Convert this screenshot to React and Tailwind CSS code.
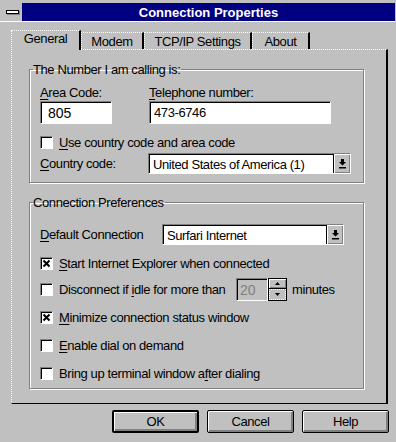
import React from 'react';

const font = { fontFamily: '"Liberation Sans", Arial, sans-serif' };

const U = ({ children }) => <span className="underline underline-offset-2">{children}</span>;

const Sunken = ({ className = '', children }) => (
  <div className={`border border-t-[#808080] border-l-[#808080] border-r-white border-b-white shadow-[inset_1px_1px_0_#000] ${className}`}>
    {children}
  </div>
);

const CheckBox = ({ checked }) => (
  <div className="w-[13px] h-[13px] bg-white border border-t-[#808080] border-l-[#808080] border-r-white border-b-white shadow-[inset_1px_1px_0_#000] flex items-center justify-center shrink-0">
    {checked && (
      <svg width="9" height="9" viewBox="0 0 9 9">
        <path d="M1.5 1.5 L7.5 7.5 M7.5 1.5 L1.5 7.5" stroke="#000" strokeWidth="2" />
      </svg>
    )}
  </div>
);

const DropArrow = () => (
  <div className="w-[17px] h-full bg-[#c0c0c0] border-l border-black flex items-center justify-center shadow-[inset_1px_1px_0_#fff,inset_-1px_-1px_0_#808080]">
    <svg width="9" height="11" viewBox="0 0 9 11">
      <path d="M3 1 H6 V4 H8 L4.5 7.5 L1 4 H3 Z" fill="#000" />
      <rect x="1" y="9" width="7" height="1.5" fill="#000" />
    </svg>
  </div>
);

const Select = ({ value, className }) => (
  <Sunken className={`flex items-stretch bg-white ${className}`}>
    <div className="flex-1 flex items-center pl-[4px] pt-[1px] text-[13px] tracking-[-0.4px]">{value}</div>
    <DropArrow />
  </Sunken>
);

const Check = ({ checked, h, children }) => (
  <div className={`flex items-center gap-[6px] ${h}`}>
    <CheckBox checked={checked} />
    <span className="whitespace-nowrap">{children}</span>
  </div>
);

const Button = ({ children, isDefault }) => (
  <div
    className={`w-[87px] h-[23px] rounded-[2px] bg-[#c0c0c0] flex items-center justify-center text-[13px] ${
      isDefault ? 'border-2' : 'border'
    } border-black shadow-[inset_1px_1px_0_#fff,inset_-2px_-2px_0_#808080]`}
  >
    {children}
  </div>
);

const Tab = ({ children, active, w }) => (
  <div
    className={`${w} flex justify-center text-[13px] border-t border-l border-dotted border-white border-r-2 border-r-black [border-right-style:solid] ${
      active ? 'h-[20px] pt-[1px] -mb-[1px] relative bg-[#c0c0c0] z-10' : 'h-[17px] pt-[2px]'
    }`}
  >
    {children}
  </div>
);

export default function App() {
  return (
    <div className="w-[396px] h-[442px] bg-[#c0c0c0] overflow-hidden text-[13px] tracking-[-0.4px] text-black leading-none" style={font}>
      {/* title bar */}
      <div className="pt-[3px] pl-[3px] pr-[1px] flex h-[21px]">
        <div className="w-[19px] bg-[#c0c0c0] flex items-center justify-center">
          <div className="w-[13px] h-[4px] bg-white border border-black shadow-[1px_1px_0_#808080]" />
        </div>
        <div className="flex-1 bg-[#000080] flex items-center justify-center">
          <span className="text-white font-bold text-[13px] tracking-normal">Connection Properties</span>
        </div>
      </div>
      <div className="h-[1px] bg-white mr-[1px]" />

      {/* tabs */}
      <div className="mt-[8px] ml-[11px] flex items-end h-[19px]">
        <Tab active w="w-[70px]">General</Tab>
        <Tab w="w-[63px]">Modem</Tab>
        <Tab w="w-[108px]">TCP/IP Settings</Tab>
        <Tab w="w-[58px]">About</Tab>
      </div>

      {/* panel */}
      <div className="ml-[11px] w-[377px] h-[355px] border-t border-l border-dotted border-white border-r-2 border-b border-r-black border-b-black [border-right-style:solid] [border-bottom-style:solid]">
        <fieldset className="ml-[17px] mt-[13px] w-[335px] border border-[#808080] shadow-[1px_1px_0_#fff,inset_1px_1px_0_#fff] pl-[10px] pb-[8px]">
          <legend className="ml-[-7px] pr-[1px]">The Number I am calling is:</legend>
          <div className="flex mt-[10px]">
            <div className="w-[109px]">
              <div className="h-[15px]"><U>A</U>rea Code:</div>
              <Sunken className="w-[72px] h-[23px] bg-white flex items-center pl-[7px] text-[14px] tracking-normal">805</Sunken>
            </div>
            <div>
              <div className="h-[15px]"><U>T</U>elephone number:</div>
              <Sunken className="w-[182px] h-[23px] bg-white flex items-center pl-[4px]">473-6746</Sunken>
            </div>
          </div>
          <div className="flex items-center gap-[6px] mt-[12px]">
            <CheckBox />
            <span><U>U</U>se country code and area code</span>
          </div>
          <div className="flex items-center mt-[4px]">
            <div className="w-[108px]"><U>C</U>ountry code:</div>
            <Select value="United States of America (1)" className="w-[203px] h-[21px]" />
          </div>
        </fieldset>

        <fieldset className="ml-[17px] mt-[13px] w-[335px] border border-[#808080] shadow-[1px_1px_0_#fff,inset_1px_1px_0_#fff] pl-[10px] pb-[1px]">
          <legend className="ml-[-7px] pr-[1px]">Connection Preferences</legend>
          <div className="flex items-center mt-[15px]">
            <div className="w-[122px]"><U>D</U>efault Connection</div>
            <Select value="Surfari Internet" className="w-[182px] h-[21px]" />
          </div>
          <div className="mt-[5px]">
            <Check checked h="h-[26px]"><U>S</U>tart Internet Explorer when connected</Check>
            <div className="flex items-center h-[27px]">
              <CheckBox />
              <span className="ml-[6px] w-[177px] whitespace-nowrap">Disconnect if <U>i</U>dle for more than</span>
              <Sunken className="w-[32px] h-[23px] bg-[#c0c0c0] text-[#808080] flex items-center pl-[3px] text-[14px] tracking-normal">20</Sunken>
              <div className="w-[19px] h-[23px] border border-black flex flex-col">
                <div className="flex-1 bg-[#c0c0c0] shadow-[inset_1px_1px_0_#fff,inset_-1px_-1px_0_#808080] flex items-center justify-center border-b border-black">
                  <svg width="5" height="3" viewBox="0 0 5 3"><path d="M2.5 0 L5 3 H0 Z" fill="#000" /></svg>
                </div>
                <div className="flex-1 bg-[#c0c0c0] border border-dotted border-white flex items-center justify-center">
                  <svg width="5" height="3" viewBox="0 0 5 3"><path d="M0 0 H5 L2.5 3 Z" fill="#000" /></svg>
                </div>
              </div>
              <span className="ml-[5px]">minutes</span>
            </div>
            <Check checked h="h-[28px]"><U>M</U>inimize connection status window</Check>
            <Check h="h-[28px]"><U>E</U>nable dial on demand</Check>
            <Check h="h-[28px]">Bring up terminal window a<U>f</U>ter dialing</Check>
          </div>
        </fieldset>
      </div>

      {/* buttons */}
      <div className="flex justify-end gap-[8px] mt-[6px] pr-[7px]">
        <Button isDefault>OK</Button>
        <Button>Cancel</Button>
        <Button>Help</Button>
      </div>
    </div>
  );
}
